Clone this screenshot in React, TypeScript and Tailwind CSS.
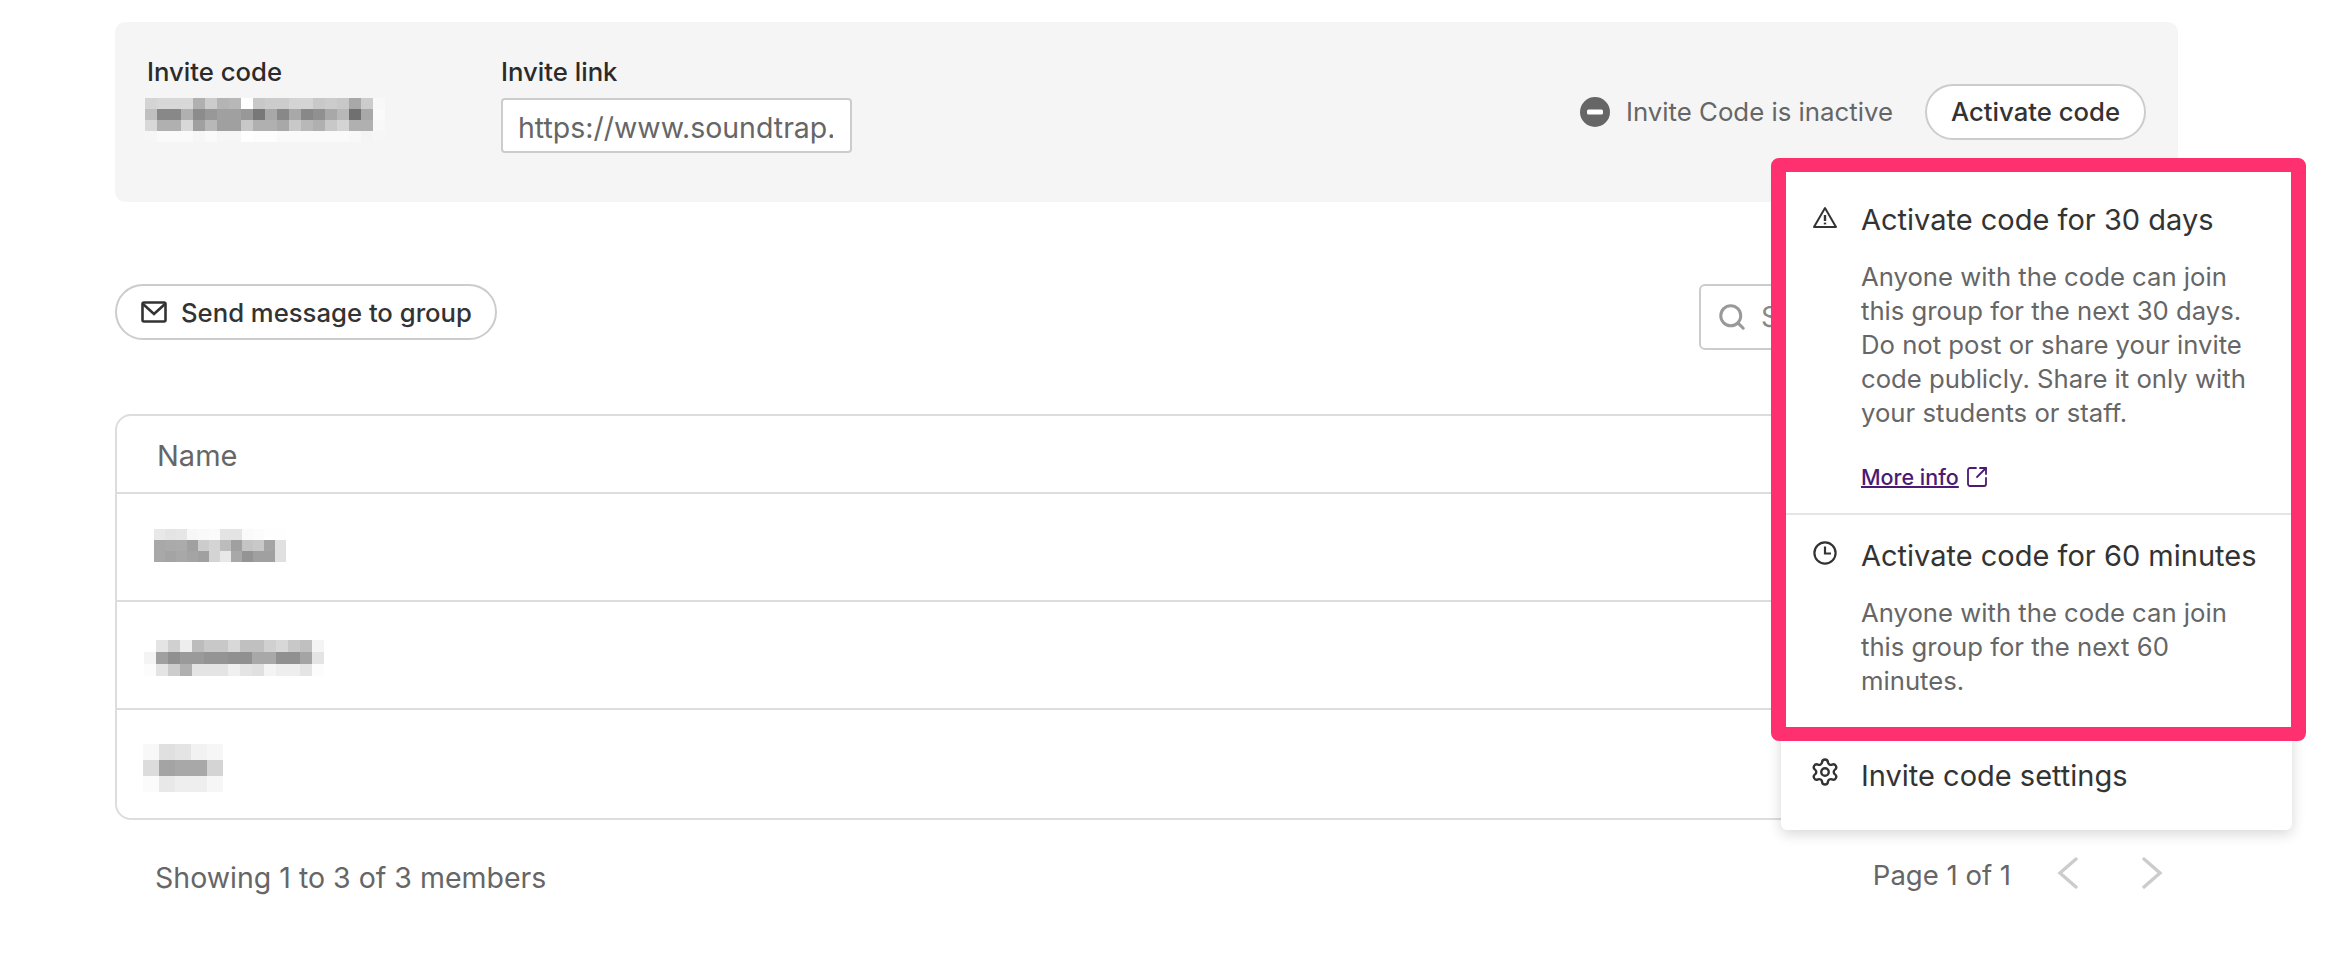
import { Search, Settings, SquareArrowOutUpRight } from "lucide-react";

const fontStack = { fontFamily: "Inter, sans-serif" };

type MosaicProps = {
  rows: string[][];
  cellW: number;
  cellH: number;
  className?: string;
};

// the names are pixelated in the picture, so they are drawn as small grey tiles
function Mosaic({ rows, cellW, cellH, className }: MosaicProps) {
  return (
    <svg
      className={className}
      width={rows[0].length * cellW}
      height={rows.length * cellH}
      shapeRendering="crispEdges"
    >
      {rows.map((row, y) =>
        row.map((v, x) => (
          <rect key={`${x}-${y}`} x={x * cellW} y={y * cellH} width={cellW} height={cellH} fill={`#${v}${v}${v}`} />
        )),
      )}
    </svg>
  );
}

const codeTiles = [
  "d4 d8 d8 d8 b0 cc b4 b8 ff c8 cc cc d4 d4 c8 cc c8 a8 cc f8".split(" "),
  "c0 88 88 b0 8c 98 a0 a0 98 78 a8 88 a8 88 90 a8 b8 70 a8 fa".split(" "),
  "d8 b0 b0 d8 a0 b8 a0 a0 c8 b0 b0 a8 c8 b8 b0 c8 d4 b0 b0 f8".split(" "),
  "f6 fa fa fa f6 fa f6 f6 ff fd fd fa fa fa fa fa fa f8 f4 f6".split(" "),
];

const memberOne = [
  "e8 e4 e6 f7 f9 fb e4 e4 fa fc fe fe".split(" "),
  "a8 aa ab a0 cc d4 bc a0 c4 c8 a4 e0".split(" "),
  "a8 a4 a8 a4 a0 d4 e8 a8 94 a0 a0 e0".split(" "),
];

const memberTwo = [
  "ff e4 d0 ee bc c8 c8 d8 c0 c0 d0 d8 c8 c0 f4".split(" "),
  "f4 a0 90 9a 9a 94 94 90 90 a8 a8 90 90 a4 e4".split(" "),
  "fc e4 cc b0 e4 e4 e4 f0 e4 e0 f4 ee ee e4 fc".split(" "),
];

const memberThree = [
  "f8 e0 e4 f2 f6".split(" "),
  "dc a4 a8 a8 d4".split(" "),
  "fb e8 ee ee f6".split(" "),
];

function MailIcon() {
  return (
    <svg width="26" height="22" viewBox="0 0 26 22" fill="none" stroke="#333" strokeWidth="2.6">
      <rect x="1.5" y="1.5" width="23" height="19" rx="1.5" />
      <path d="M2 3l11 10L24 3" />
    </svg>
  );
}

function WarningIcon() {
  return (
    <svg width="24" height="24" viewBox="0 0 24 24" fill="none" stroke="#333" strokeWidth="2" strokeLinejoin="round">
      <path d="M12 3L23 22H1L12 3z" />
      <path d="M12 10v6" strokeWidth="2.4" />
      <path d="M12 17.6v1.8" strokeWidth="2.4" />
    </svg>
  );
}

function ClockIcon() {
  return (
    <svg width="24" height="24" viewBox="0 0 24 24" fill="none" stroke="#333" strokeWidth="2.2">
      <circle cx="12" cy="12" r="10.6" />
      <path d="M12 5.5V12.5H18" />
    </svg>
  );
}

function InactiveIcon() {
  return (
    <svg width="30" height="30" viewBox="0 0 30 30">
      <circle cx="15" cy="15" r="15" fill="#666" />
      <rect x="7" y="12.5" width="16" height="5" rx="1.5" fill="#fff" />
    </svg>
  );
}

function PageArrow({ flip, className }: { flip?: boolean; className?: string }) {
  return (
    <svg className={className} width="22" height="32" viewBox="0 0 22 32" fill="none" stroke="#ccc" strokeWidth="3.4" strokeLinecap="round">
      <path d={flip ? "M3 2L19 16L3 30" : "M19 2L3 16L19 30"} />
    </svg>
  );
}

type MenuItemProps = {
  icon: React.ReactNode;
  title: string;
  children?: React.ReactNode;
  className?: string;
};

function MenuItem({ icon, title, children, className }: MenuItemProps) {
  return (
    <div className={`flex ${className ?? ""}`}>
      <div className="w-[80px] shrink-0 pl-[32px] pt-[2px]">{icon}</div>
      <div className="min-w-0 flex-1">
        <p className="whitespace-nowrap text-[29px] leading-[34px] text-[#333]">{title}</p>
        {children}
      </div>
    </div>
  );
}

function MemberRow({ children, height }: { children: React.ReactNode; height: string }) {
  return <div className={`flex items-center border-b-2 border-[#ddd] last:border-b-0 ${height}`}>{children}</div>;
}

export default function App() {
  return (
    <div className="min-h-screen bg-white pt-[22px] pl-[115px]" style={fontStack}>
      <div className="relative w-[2063px]">
        <section className="flex h-[180px] items-start rounded-[10px] bg-[#f5f5f5] pl-[32px] pr-[32px] pt-[33px]">
          <div className="w-[354px]">
            <p className="text-[25.7px] leading-[34px] font-medium text-[#2b2b2b]">Invite code</p>
            <Mosaic rows={codeTiles} cellW={12} cellH={11} className="-ml-[2px] mt-[9px]" />
          </div>
          <div>
            <p className="text-[25.7px] leading-[34px] font-medium text-[#2b2b2b]">Invite link</p>
            <input
              readOnly
              value="https://www.soundtrap.com/join/group"
              className="mt-[9px] h-[55px] w-[351px] rounded-[4px] border-2 border-[#ccc] bg-white pl-[15px] pr-[17px] pt-[4px] text-[28.5px] text-[#666] outline-none"
            />
          </div>
          <div className="ml-auto flex items-center pt-[29px]">
            <InactiveIcon />
            <span className="ml-[16px] pt-[1px] text-[25.8px] text-[#666]">Invite Code is inactive</span>
            <button
              type="button"
              className="ml-[32px] h-[56px] w-[221px] rounded-full border-2 border-[#ccc] bg-white pt-[1px] text-[25.7px] font-medium text-[#333]"
            >
              Activate code
            </button>
          </div>
        </section>

        <div className="mt-[82px] flex items-start justify-between">
          <button
            type="button"
            className="flex h-[56px] w-[382px] items-center rounded-full border-2 border-[#ccc] bg-white pl-[24px] text-[25.7px] font-medium text-[#333]"
          >
            <MailIcon />
            <span className="ml-[14px] pt-[2px]">Send message to group</span>
          </button>
          <div className="relative w-[479px]">
            <Search className="absolute left-[18px] top-[18px] text-[#999]" size={30} strokeWidth={2.4} />
            <input
              readOnly
              placeholder="Search members"
              className="h-[66px] w-full rounded-[6px] border-2 border-[#ccc] bg-white pl-[60px] text-[28px] outline-none placeholder:text-[#888]"
            />
          </div>
        </div>

        <div className="mt-[64px] h-[406px] rounded-[16px] border-2 border-[#ddd]">
          <div className="flex h-[78px] items-center border-b-2 border-[#ddd] pl-[40px] pt-[3px] text-[29px] text-[#666]">Name</div>
          <MemberRow height="h-[108px]">
            <Mosaic rows={memberOne} cellW={11} cellH={11} className="ml-[37px] -mt-[3px]" />
          </MemberRow>
          <MemberRow height="h-[108px]">
            <Mosaic rows={memberTwo} cellW={12} cellH={12} className="ml-[27px] mt-[6px]" />
          </MemberRow>
          <MemberRow height="h-[108px]">
            <Mosaic rows={memberThree} cellW={16} cellH={16} className="ml-[26px] mt-[8px]" />
          </MemberRow>
        </div>

        <div className="mt-[37px] flex items-center justify-between">
          <p className="pl-[40px] text-[28.5px] text-[#666]">Showing 1 to 3 of 3 members</p>
          <div className="flex items-center pr-[15px] text-[#666]">
            <span className="-mt-[5px] text-[27.5px]">Page 1 of 1</span>
            <PageArrow className="ml-[46px] -mt-[10px]" />
            <PageArrow flip className="ml-[62px] -mt-[10px]" />
          </div>
        </div>

        {/* dropdown opened from the activate button */}
        <div className="absolute left-[1666px] top-[150px] h-[658px] w-[511px] rounded-[6px] bg-white shadow-[0_4px_14px_rgba(0,0,0,0.16)]">
          <MenuItem icon={<WarningIcon />} title="Activate code for 30 days" className="pt-[31px]">
            <p className="mt-[23px] pr-[30px] text-[25.7px] leading-[34px] text-[#666]">
              Anyone with the code can join this group for the next 30 days. Do not post or share your invite code
              publicly. Share it only with your students or staff.
            </p>
            <a className="mt-[30px] flex items-center text-[21.5px] leading-[34px] font-medium text-[#4b1a73]">
              <span className="underline decoration-2">More info</span>
              <SquareArrowOutUpRight className="ml-[6px]" size={24} strokeWidth={1.8} />
            </a>
          </MenuItem>
          <MenuItem
            icon={<ClockIcon />}
            title="Activate code for 60 minutes"
            className="mt-[19px] border-t-2 border-[#e5e5e5] pt-[24px]"
          >
            <p className="mt-[23px] pr-[30px] text-[25.7px] leading-[34px] text-[#666]">
              Anyone with the code can join this group for the next 60 minutes.
            </p>
          </MenuItem>
          <MenuItem
            icon={<Settings className="-ml-[3px] -mt-[4px]" size={30} color="#333" strokeWidth={1.9} />}
            title="Invite code settings"
            className="mt-[61px]"
          />
        </div>

        {/* pink highlight drawn on top of the menu */}
        <div className="pointer-events-none absolute left-[1656px] top-[136px] h-[583px] w-[535px] rounded-[8px] border-x-[15px] border-y-[14px] border-[#ff3070]" />
      </div>
    </div>
  );
}
